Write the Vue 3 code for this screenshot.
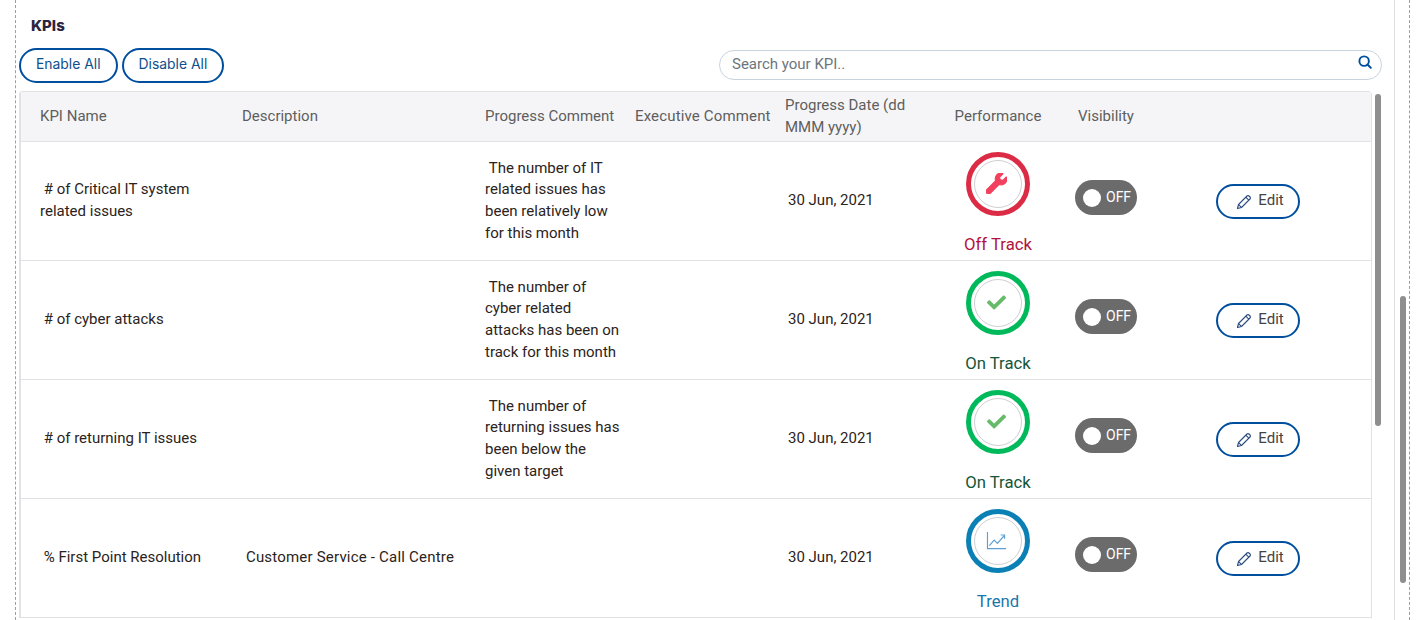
<script setup>
const wrench = 'M507.73 109.1c-2.24-9.03-13.54-12.09-20.12-5.51l-74.36 74.36-67.88-11.31-11.31-67.88 74.36-74.36c6.62-6.62 3.43-17.9-5.66-20.16-47.38-11.74-99.55.91-136.58 37.93-39.64 39.64-50.55 97.1-34.05 147.2L18.74 402.76c-24.99 24.99-24.99 65.51 0 90.5 24.99 24.99 65.51 24.99 90.5 0l213.21-213.21c50.12 16.71 107.47 5.68 147.37-34.22 37.07-37.07 49.7-89.32 37.91-136.73z'
const check = 'M173.898 439.404l-166.4-166.4c-9.997-9.997-9.997-26.206 0-36.204l36.203-36.204c9.997-9.998 26.207-9.998 36.204 0L192 312.69 432.095 72.596c9.997-9.997 26.207-9.997 36.204 0l36.203 36.204c9.997 9.997 9.997 26.206 0 36.204l-294.4 294.401c-9.998 9.997-26.207 9.997-36.204-.001z'

const rows = [
  { name: '\u00a0# of Critical IT system related issues', desc: '', comment: '\u00a0The number of IT related issues has been relatively low for this month', status: 'off', label: 'Off Track' },
  { name: '\u00a0# of cyber attacks', desc: '', comment: '\u00a0The number of cyber related attacks has been on track for this month', status: 'on', label: 'On Track' },
  { name: '\u00a0# of returning IT issues', desc: '', comment: '\u00a0The number of returning issues has been below the given target', status: 'on', label: 'On Track' },
  { name: '\u00a0% First Point Resolution', desc: '\u00a0Customer Service - Call Centre', comment: '', status: 'trend', label: 'Trend' }
]
</script>

<template>
  <div class="screen">
    <div class="panel">
      <div class="inner">
        <h2 class="title">KPIs</h2>
        <div class="toolbar">
          <div class="actions">
            <button class="pill">Enable All</button>
            <button class="pill">Disable All</button>
          </div>
          <div class="search">
            <span class="placeholder">Search your KPI..</span>
            <svg class="search-icon" viewBox="0 0 16 16" width="14" height="14" fill="none" stroke="#004f9f" stroke-width="2.2">
              <circle cx="7" cy="7" r="5.4" />
              <path d="M10.8 10.8l3.8 3.8" stroke-linecap="round" />
            </svg>
          </div>
        </div>
        <div class="table">
          <div class="row head">
            <div class="c-name">KPI Name</div>
            <div class="c-desc">Description</div>
            <div class="c-comment">Progress Comment</div>
            <div class="c-exec">Executive Comment</div>
            <div class="c-date">Progress Date (dd MMM yyyy)</div>
            <div class="c-perf">Performance</div>
            <div class="c-vis">Visibility</div>
            <div class="c-edit"></div>
          </div>
          <div v-for="r in rows" :key="r.name" class="row body">
            <div class="c-name">{{ r.name }}</div>
            <div class="c-desc">{{ r.desc }}</div>
            <div class="c-comment">{{ r.comment }}</div>
            <div class="c-exec"></div>
            <div class="c-date date">30 Jun, 2021</div>
            <div class="c-perf perf" :class="r.status">
              <div class="ring">
                <div class="disc">
                  <svg v-if="r.status === 'off'" viewBox="0 0 512 512" width="21" height="21"><path :d="wrench" fill="#f2405e" stroke="#f2405e" stroke-width="26" /></svg>
                  <svg v-else-if="r.status === 'on'" viewBox="0 0 512 512" width="19" height="19"><path :d="check" fill="#66bb6a" /></svg>
                  <svg v-else viewBox="0 0 22 20" width="21" height="19" fill="none" stroke="#5b9fd6" stroke-width="1.2">
                    <path d="M1.5 1v17.5H21" />
                    <path d="M3.5 15.5l5-6 3.5 3.5 7-8" />
                    <path d="M15.5 4.2h4v4" />
                  </svg>
                </div>
              </div>
              <div class="status-label">{{ r.label }}</div>
            </div>
            <div class="c-vis vis">
              <div class="toggle"><span class="knob"></span><span class="off-text">OFF</span></div>
            </div>
            <div class="c-edit edit-cell">
              <button class="edit">
                <svg viewBox="0 0 16 16" width="16" height="16" fill="none" stroke="#2a4a80" stroke-width="1.1" stroke-linejoin="round">
                  <path d="M1.5 14.5l1-4L11 2a1.4 1.4 0 0 1 2 0l1 1a1.4 1.4 0 0 1 0 2l-8.5 8.5z" />
                  <path d="M9.8 3.2l3 3M2.6 10.6l2.8 2.8" />
                </svg>
                <span class="edit-text">Edit</span>
              </button>
            </div>
          </div>
        </div>
        <div class="thumb inner-thumb"></div>
      </div>
      <div class="thumb outer-thumb"></div>
    </div>
  </div>
</template>

<style scoped>
.screen {
  width: 1424px;
  height: 620px;
  overflow: hidden;
  background: #fff;
  font-family: Roboto, "Liberation Sans", sans-serif;
  color: #2b2b2b;
}
.panel {
  position: relative;
  box-sizing: border-box;
  width: 1395px;
  height: 620px;
  margin-left: 15px;
  border-left: 1px dashed #7aa5dc;
  border-right: 1px dashed #7aa5dc;
}
.inner {
  position: relative;
  box-sizing: border-box;
  width: 1379px;
  height: 620px;
  padding: 0 0 0 3px;
  border-right: 1px solid #dfdfe3;
}
.title {
  margin: 0;
  padding: 17px 0 0 12px;
  height: 48px;
  box-sizing: border-box;
  font-family: Inter, sans-serif;
  font-size: 15px;
  line-height: 18px;
  font-weight: 800;
  color: #2c2440;
}
.toolbar {
  display: flex;
  justify-content: space-between;
  align-items: center;
  width: 1363px;
  height: 35px;
  margin-bottom: 8px;
}
.actions {
  display: flex;
  gap: 4px;
}
.pill {
  box-sizing: border-box;
  height: 35px;
  padding: 0 15px 4px;
  border: 2px solid #004f9f;
  border-radius: 18px;
  background: #fff;
  color: #0f4f8c;
  font-family: Inter, sans-serif;
  font-size: 13.9px;
}
.search {
  display: flex;
  align-items: center;
  justify-content: space-between;
  box-sizing: border-box;
  width: 663px;
  height: 30px;
  padding: 0 9px 0 12px;
  margin-top: -1px;
  border: 1px solid #c8d3de;
  border-radius: 15px;
}
.placeholder {
  margin-top: -2px;
  font-size: 15px;
  color: #6c757d;
}
.search-icon {
  margin-top: -6px;
}
.table {
  box-sizing: border-box;
  width: 1353px;
  border: 1px solid #e2e2e6;
  border-bottom: 0;
  border-left-width: 2px;
  border-radius: 4px 4px 0 0;
}
.row {
  display: grid;
  grid-template-columns: 202px 243px 150px 150px 140px 146px 138px 1fr;
  box-sizing: border-box;
  padding-left: 19px;
  border-bottom: 1px solid #e2e2e6;
  font-size: 15px;
  line-height: 21.6px;
}
.row > div {
  min-width: 0;
}
.head {
  height: 50px;
  align-items: center;
  background: #f5f5f7;
  color: #5e5e5e;
}
.head .c-exec {
  letter-spacing: 0.15px;
}
.body {
  height: 119px;
  align-items: center;
  color: #2b2320;
}
.body .c-desc {
  letter-spacing: 0.2px;
}
.c-name {
  padding-right: 22px;
}
.c-comment {
  padding-right: 13px;
}
.c-date {
  padding-right: 14px;
}
.c-vis {
  padding-left: 7px;
}
.c-edit {
  padding-left: 7px;
}
.head .c-perf {
  text-align: center;
}
.date {
  padding-left: 3px;
}
.perf {
  display: flex;
  flex-direction: column;
  align-items: center;
  align-self: start;
  padding-top: 10px;
}
.ring {
  display: flex;
  align-items: center;
  justify-content: center;
  box-sizing: border-box;
  width: 64px;
  height: 64px;
  border: 5px solid;
  border-radius: 50%;
}
.disc {
  display: flex;
  align-items: center;
  justify-content: center;
  box-sizing: border-box;
  width: 48px;
  height: 48px;
  border: 1px solid #cfcfcf;
  border-radius: 50%;
}
.disc svg {
  margin: -1px 0 0 -3px;
}
.status-label {
  margin-top: 17px;
  font-size: 16.7px;
  line-height: 24px;
}
.off .ring { border-color: #dc2c45; }
.off .status-label { color: #b0133c; }
.on .ring { border-color: #00b95a; }
.on .status-label { color: #14553a; }
.trend .ring { border-color: #0a80b5; }
.trend .status-label { color: #1b76ab; }
.vis {
  align-self: start;
  padding-top: 38px;
}
.toggle {
  display: flex;
  align-items: center;
  gap: 5px;
  box-sizing: border-box;
  width: 62px;
  height: 35px;
  margin-left: -3px;
  padding-left: 8px;
  border-radius: 18px;
  background: #6b6b6b;
}
.knob {
  width: 18px;
  height: 18px;
  border-radius: 50%;
  background: #fff;
}
.off-text {
  margin-top: 0;
  font-size: 14px;
  color: #fff;
}
.edit-cell {
  align-self: start;
  padding-top: 42px;
}
.edit {
  display: flex;
  align-items: center;
  justify-content: center;
  gap: 6px;
  box-sizing: border-box;
  width: 84px;
  height: 35px;
  padding: 0 0 0 4px;
  border: 2px solid #004f9f;
  border-radius: 18px;
  background: #fff;
  color: #444;
  font-family: Roboto, sans-serif;
  font-size: 15px;
}
.edit svg {
  margin-top: 1px;
}
.edit-text {
  margin-top: -3px;
}
.thumb {
  position: absolute;
  background: #8e8e8e;
  border-radius: 3px;
}
.inner-thumb {
  left: 1359px;
  top: 94px;
  width: 6px;
  height: 332px;
}
.outer-thumb {
  left: 1384px;
  top: 296px;
  width: 6px;
  height: 287px;
}
</style>
